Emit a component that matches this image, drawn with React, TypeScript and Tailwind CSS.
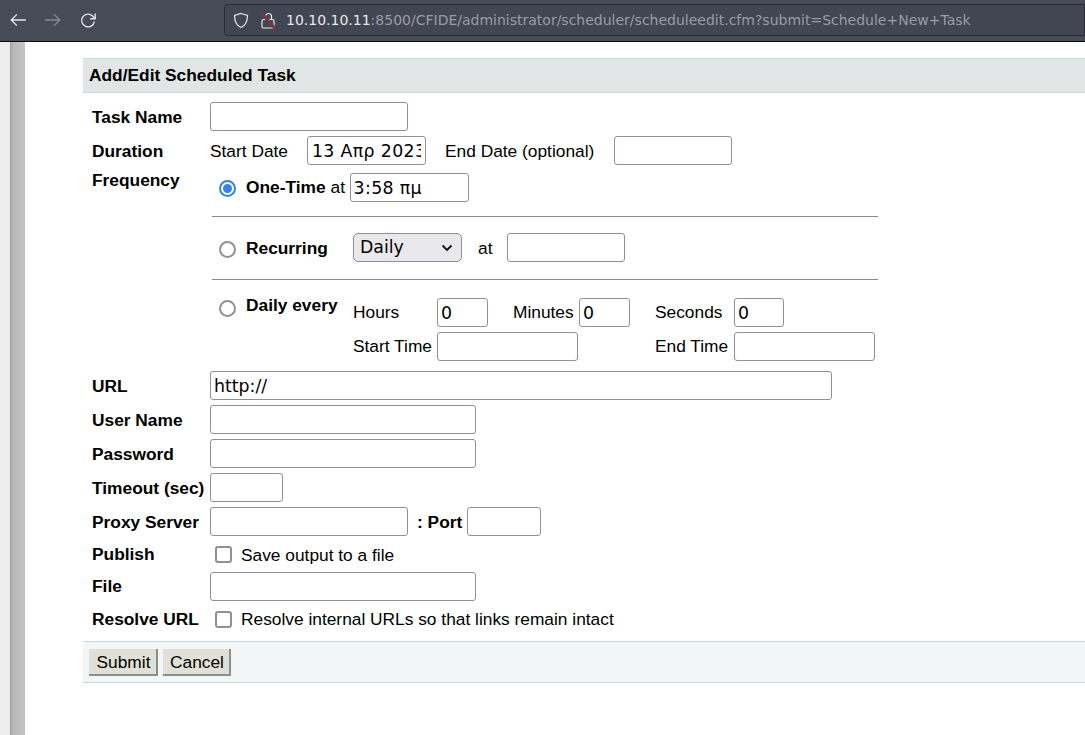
import React from "react";

const sans = "font-['Liberation_Sans',Arial,sans-serif]";
const inputCls =
  "h-[29px] shrink-0 rounded-[3px] border border-[#8f8f9d] bg-white pl-[3px] pr-[4px] font-['DejaVu_Sans',sans-serif] text-[17.33px] text-black outline-none";

function Field({ w, value = "" }: { w: string; value?: string }) {
  return <input readOnly value={value} className={`${inputCls} ${w}`} />;
}

function Label({ children }: { children: React.ReactNode }) {
  return <div className="w-[127px] shrink-0 translate-y-[1px] pl-[9px] font-bold whitespace-nowrap">{children}</div>;
}

function Radio({ checked = false }: { checked?: boolean }) {
  return checked ? (
    <span className="flex h-[17px] w-[17px] shrink-0 items-center justify-center rounded-full border-2 border-[#3584e4] bg-white">
      <span className="h-[9px] w-[9px] rounded-full bg-[#3584e4]" />
    </span>
  ) : (
    <span className="block h-[17px] w-[17px] shrink-0 rounded-full border-2 border-[#8f8f9d] bg-white" />
  );
}

function Check() {
  return <span className="block h-[17px] w-[17px] shrink-0 rounded-[3px] border-2 border-[#8f8f9d] bg-white" />;
}

function Btn({ w, children }: { w: string; children: React.ReactNode }) {
  return (
    <button className={`h-[27px] border-r-2 border-b-2 border-[#8f8f8a] bg-[#e0e0d6] pt-[3px] pl-[2px] text-center text-[17.33px] leading-none text-black ${w}`}>
      {children}
    </button>
  );
}

export default function App() {
  return (
    <div className={`flex h-[735px] w-[1085px] flex-col overflow-hidden bg-white text-[17.33px] text-black ${sans}`}>
      {/* browser toolbar */}
      <div className="flex h-[42px] shrink-0 items-center border-b border-[#0c0c0d] bg-[#474a57] pb-[1px]">
        <div className="ml-[9px] flex w-[215px] items-center text-[#e6e6ea]">
          <svg width="18" height="18" viewBox="0 0 16 16" fill="none" stroke="currentColor" strokeWidth="1.2">
            <path d="M15 8H2M7 3 2 8l5 5" />
          </svg>
          <svg className="ml-[17px] opacity-40" width="18" height="18" viewBox="0 0 16 16" fill="none" stroke="currentColor" strokeWidth="1.2">
            <path d="M1 8h13M9 3l5 5-5 5" />
          </svg>
          <svg className="ml-[18px]" width="17" height="17" viewBox="0 0 16 16" fill="none" stroke="currentColor" strokeWidth="1.3">
            <path d="M13.5 9a6 6 0 1 1-1.6-5.2L14 6" />
            <path d="M14.3 1.5V6.3H9.6" />
          </svg>
        </div>
        <div className="flex h-[32px] flex-1 items-center rounded-l-[4px] border border-[#2a2a35] bg-[#424652] pl-[8px] font-['DejaVu_Sans',sans-serif] text-[14px] whitespace-nowrap">
          <svg width="16" height="17" viewBox="0 0 16 17" fill="none" stroke="#e6e6ea" strokeWidth="1.2">
            <path d="M8 1.5 14.5 3.5C14.5 9 12.5 13.5 8 15.5 3.5 13.5 1.5 9 1.5 3.5Z" />
          </svg>
          <svg className="ml-[12px]" width="15" height="17" viewBox="0 0 15 17" fill="none">
            <path d="M4.5 7.5V4.5a3 3 0 0 1 6 0v3" stroke="#e6e6ea" strokeWidth="1.2" />
            <rect x="1" y="7.5" width="12" height="8.5" rx="1.5" stroke="#e6e6ea" strokeWidth="1.2" />
            <path d="M1 1.5 14 16.5" stroke="#424652" strokeWidth="3" />
            <path d="M1 1.5 14 16.5" stroke="#e0113c" strokeWidth="1.1" />
          </svg>
          <span className="ml-[10px] text-[#e8e8ec]">10.10.10.11</span>
          <span className="text-[#9a9ca6]">:8500/CFIDE/administrator/scheduler/scheduleedit.cfm?submit=Schedule+New+Task</span>
        </div>
      </div>

      <div className="flex min-h-0 flex-1">
        {/* left rail */}
        <div className="w-[10px] shrink-0 bg-[#ededed]" />
        <div className="w-[15px] shrink-0 bg-[linear-gradient(to_right,#a0a0a0,#b8b8b8_20%,#c4c4c4)]" />

        {/* page */}
        <div className="ml-[58px] min-w-0 flex-1 pt-[16px]">
          <div className="flex h-[35px] items-center border-y border-[#c5dcdc] bg-[#e1e5e5] pl-[6px] font-bold">
            Add/Edit Scheduled Task
          </div>

          <div className="mt-[9px] flex h-[29px] items-center">
            <Label>Task Name</Label>
            <Field w="w-[198px]" />
          </div>

          <div className="mt-[5px] flex h-[29px] items-center">
            <Label>Duration</Label>
            <span className="w-[97px] translate-y-[1px]">Start Date</span>
            <Field w="w-[119px] tracking-[0.35px] indent-[1px]" value="13 Απρ 2023" />
            <span className="ml-[19px] w-[169px] translate-y-[1px]">End Date (optional)</span>
            <Field w="w-[118px]" />
          </div>

          <div className="mt-[8px] flex h-[29px]">
            <Label><span className="block -translate-y-[6px]">Frequency</span></Label>
            <div className="ml-[9px] flex items-center">
              <div className="translate-y-[1px]"><Radio checked /></div>
              <span className="ml-[10px] font-bold">One-Time</span>
              <span className="ml-[5px] w-[19px]">at</span>
              <Field w="w-[119px] tracking-[0.35px]" value="3:58 πμ" />
            </div>
          </div>

          <div className="mt-[14px] ml-[129px] h-px w-[666px] bg-[#8a8a8a]" />

          <div className="mt-[16px] ml-[136px] flex h-[29px] items-center">
            <div className="translate-y-[2px]"><Radio /></div>
            <span className="ml-[10px] w-[107px] translate-y-[1px] font-bold">Recurring</span>
            <span className="flex h-[29px] w-[109px] items-center justify-between rounded-[5px] border border-[#8f8f9d] bg-[#e9e9ed] pt-[1px] pr-[8px] pl-[6px] font-['DejaVu_Sans',sans-serif] text-[17.33px]">
              Daily
              <svg width="12" height="8" viewBox="0 0 12 8" fill="none" stroke="#111" strokeWidth="1.8"><path d="M1.5 1.5 6 6l4.5-4.5" /></svg>
            </span>
            <span className="ml-[16px] w-[29px] translate-y-[1px]">at</span>
            <Field w="w-[118px]" />
          </div>

          <div className="mt-[17px] ml-[129px] h-px w-[666px] bg-[#8a8a8a]" />

          <div className="mt-[18px] ml-[136px] flex">
            <div className="flex h-[18px] w-[134px] shrink-0 items-center">
              <div className="translate-y-[1px]"><Radio /></div>
              <span className="ml-[10px] -translate-y-[1px] font-bold">Daily every</span>
            </div>
            <div className="flex flex-col gap-[5px]">
              <div className="flex h-[29px] items-center">
                <span className="w-[84px]">Hours</span>
                <Field w="w-[51px]" value="0" />
                <span className="ml-[25px] w-[66px]">Minutes</span>
                <Field w="w-[51px]" value="0" />
                <span className="ml-[25px] w-[79px]">Seconds</span>
                <Field w="w-[50px]" value="0" />
              </div>
              <div className="flex h-[29px] items-center">
                <span className="w-[84px] whitespace-nowrap">Start Time</span>
                <Field w="w-[141px]" />
                <span className="ml-[77px] w-[79px] whitespace-nowrap">End Time</span>
                <Field w="w-[141px]" />
              </div>
            </div>
          </div>

          <div className="mt-[10px] flex h-[29px] items-center">
            <Label>URL</Label>
            <Field w="w-[622px]" value="http://" />
          </div>
          <div className="mt-[5px] flex h-[29px] items-center">
            <Label>User Name</Label>
            <Field w="w-[266px]" />
          </div>
          <div className="mt-[5px] flex h-[29px] items-center">
            <Label>Password</Label>
            <Field w="w-[266px]" />
          </div>
          <div className="mt-[5px] flex h-[29px] items-center">
            <Label>Timeout (sec)</Label>
            <Field w="w-[73px]" />
          </div>
          <div className="mt-[5px] flex h-[29px] items-center">
            <Label>Proxy Server</Label>
            <Field w="w-[198px]" />
            <span className="ml-[9px] w-[50px] translate-y-[1px] font-bold whitespace-nowrap">: Port</span>
            <Field w="w-[74px]" />
          </div>
          <div className="mt-[5px] flex h-[26px] items-center">
            <Label>Publish</Label>
            <div className="ml-[5px] shrink-0"><Check /></div>
            <span className="ml-[9px] translate-y-[2px]">Save output to a file</span>
          </div>
          <div className="mt-[5px] flex h-[29px] items-center">
            <Label><span className="block -translate-y-[1px]">File</span></Label>
            <Field w="w-[266px]" />
          </div>
          <div className="mt-[5px] flex h-[26px] items-center">
            <Label>Resolve URL</Label>
            <div className="ml-[5px] shrink-0"><Check /></div>
            <span className="ml-[9px] translate-y-[1px]">Resolve internal URLs so that links remain intact</span>
          </div>

          <div className="mt-[9px] flex h-[42px] items-center gap-[5px] border-y border-[#c5dcdc] bg-[#f2f6f7] pl-[6px]">
            <Btn w="w-[69px]">Submit</Btn>
            <Btn w="w-[68px]">Cancel</Btn>
          </div>
        </div>
      </div>
    </div>
  );
}
